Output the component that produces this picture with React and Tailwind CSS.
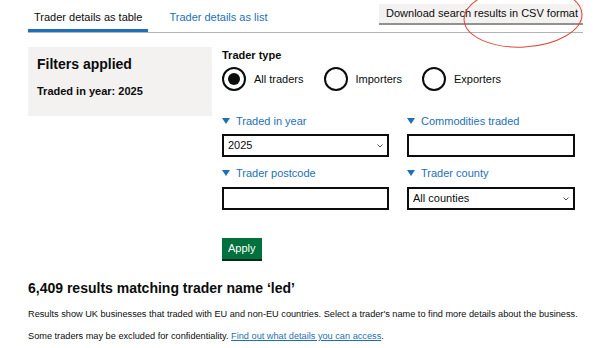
import { useState } from "react";

const font = { fontFamily: '"Liberation Sans", Arial, sans-serif' };

function Radio({ label, checked, onClick }) {
  return (
    <button onClick={onClick} className="flex items-center">
      <span className="w-[24px] h-[24px] rounded-full border-2 border-[#0b0c0c] flex items-center justify-center">
        {checked && <span className="w-[12px] h-[12px] rounded-full bg-[#0b0c0c]" />}
      </span>
      <span className="ml-[8px] text-[11px] leading-[14px]">{label}</span>
    </button>
  );
}

function Label({ children }) {
  return (
    <div className="flex items-center h-[14px] text-[#1d70b8] text-[11px] leading-[14px]">
      <svg width="8" height="6" viewBox="0 0 8 6" className="mr-[6px]">
        <path d="M0 0 H8 L4 6 Z" fill="#1d70b8" />
      </svg>
      {children}
    </div>
  );
}

function Select({ value }) {
  return (
    <div className="relative h-[23px] border-2 border-[#0b0c0c] flex items-center pl-[4px] text-[11px]">
      {value}
      <svg width="6" height="4" viewBox="0 0 6 4" className="absolute right-[4px] top-[8px]">
        <path d="M0.5 0.5 L3 3 L5.5 0.5" fill="none" stroke="#555" strokeWidth="1" />
      </svg>
    </div>
  );
}

export default function App() {
  const [type, setType] = useState("all");

  return (
    <div style={font} className="relative w-[609px] h-[348px] overflow-hidden bg-white text-[#0b0c0c] pl-[28px] pr-[26px]">
      {/* Tabs */}
      <div className="flex justify-between h-[33px] border-b border-[#b1b4b6]">
        <div className="flex h-full">
          <div className="h-full border-b-[3px] border-[#1d70b8] px-[6px] pt-[11px] text-[11px] leading-[12px]">
            Trader details as table
          </div>
          <div className="ml-[15px] px-[6px] pt-[11px] text-[11px] leading-[12px] text-[#1d70b8]">
            Trader details as list
          </div>
        </div>
        <button className="self-start mt-[4px] h-[21px] bg-[#f3f2f1] border-b-2 border-[#929191] pl-[7px] pr-[5px] text-[11px] leading-[19px]">
          Download search results in CSV format
        </button>
      </div>

      {/* Filters + form */}
      <div className="flex mt-[14px]">
        <div className="w-[184px] h-[69px] bg-[#f3f2f1] pl-[9px] pt-[9px] shrink-0">
          <div className="text-[14px] leading-[16px] font-bold">Filters applied</div>
          <div className="mt-[13px] text-[11px] leading-[13px] font-bold">Traded in year: 2025</div>
        </div>

        <div className="ml-[10px] w-[353px] pt-[1px]">
          <div className="text-[11px] leading-[14px] font-bold">Trader type</div>
          <div className="flex gap-[20px] mt-[5px]">
            <Radio label="All traders" checked={type === "all"} onClick={() => setType("all")} />
            <Radio label="Importers" checked={type === "imp"} onClick={() => setType("imp")} />
            <Radio label="Exporters" checked={type === "exp"} onClick={() => setType("exp")} />
          </div>

          <div className="grid grid-cols-[167px_168px] gap-x-[18px] mt-[23px]">
            <div>
              <Label>Traded in year</Label>
              <div className="mt-[6px]">
                <Select value="2025" />
              </div>
            </div>
            <div>
              <Label>Commodities traded</Label>
              <div className="mt-[6px] h-[23px] border-2 border-[#0b0c0c]" />
            </div>
            <div className="mt-[9px]">
              <Label>Trader postcode</Label>
              <div className="mt-[7px] h-[23px] border-2 border-[#0b0c0c]" />
            </div>
            <div className="mt-[9px]">
              <Label>Trader county</Label>
              <div className="mt-[7px]">
                <Select value="All counties" />
              </div>
            </div>
          </div>

          <button className="mt-[28px] h-[23px] px-[6px] bg-[#00703c] border-b-2 border-[#002d18] text-white text-[11px] leading-[21px]">
            Apply
          </button>
        </div>
      </div>

      {/* Results */}
      <h2 className="mt-[18px] text-[14px] leading-[18px] font-bold">
        6,409 results matching trader name ‘led’
      </h2>
      <p className="mt-[11px] text-[9.2px] leading-[12px] whitespace-nowrap">
        Results show UK businesses that traded with EU and non-EU countries. Select a trader's name to find more details about the business.
      </p>
      <p className="mt-[10px] text-[9.2px] leading-[12px] whitespace-nowrap">
        Some traders may be excluded for confidentiality.{" "}
        <a className="text-[#1d70b8] underline">Find out what details you can access</a>.
      </p>

      {/* Red annotation circle */}
      <svg className="absolute left-0 top-0 pointer-events-none" width="609" height="348">
        <ellipse cx="523" cy="17" rx="59" ry="30" fill="none" stroke="#e2443b" strokeWidth="1" transform="rotate(-3 523 17)" />
      </svg>
    </div>
  );
}
